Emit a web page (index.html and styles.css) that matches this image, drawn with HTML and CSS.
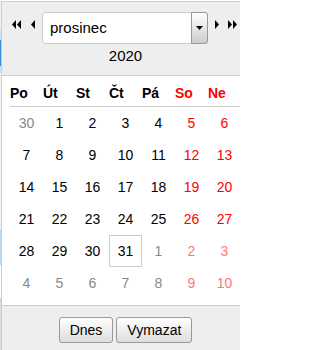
FILE: index.html
```html
<!DOCTYPE html>
<html lang="cs">
<head>
<meta charset="utf-8">
<title>Kalendář</title>
<link rel="stylesheet" href="styles.css">
</head>
<body>
<div class="cal">
  <div class="hdr">
    <div class="nav">
      <svg class="arrow dbl" width="9" height="9" viewBox="0 0 9 9"><polygon points="4,0 4,9 0,4.5"/><polygon points="9,0 9,9 5,4.5"/></svg>
      <svg class="arrow one prev" width="4" height="9" viewBox="0 0 4 9"><polygon points="4,0 4,9 0,4.5"/></svg>
      <div class="sel">
        <span class="sel-text">prosinec</span>
        <span class="sel-btn"><svg width="7" height="4" viewBox="0 0 7 4"><polygon points="0,0 7,0 3.5,4"/></svg></span>
      </div>
      <svg class="arrow one next" width="4" height="9" viewBox="0 0 4 9"><polygon points="0,0 0,9 4,4.5"/></svg>
      <svg class="arrow dbl next2" width="9" height="9" viewBox="0 0 9 9"><polygon points="0,0 0,9 4,4.5"/><polygon points="5,0 5,9 9,4.5"/></svg>
    </div>
    <div class="year">2020</div>
  </div>
  <div class="body">
    <div class="dow">
      <span>Po</span><span>Út</span><span>St</span><span>Čt</span><span>Pá</span><span class="we">So</span><span class="we">Ne</span>
    </div>
    <div class="days">
      <span class="oth">30</span><span>1</span><span>2</span><span>3</span><span>4</span><span class="we">5</span><span class="we">6</span>
      <span>7</span><span>8</span><span>9</span><span>10</span><span>11</span><span class="we">12</span><span class="we">13</span>
      <span>14</span><span>15</span><span>16</span><span>17</span><span>18</span><span class="we">19</span><span class="we">20</span>
      <span>21</span><span>22</span><span>23</span><span>24</span><span>25</span><span class="we">26</span><span class="we">27</span>
      <span>28</span><span>29</span><span>30</span><span class="today">31</span><span class="oth">1</span><span class="oth-we">2</span><span class="oth-we">3</span>
      <span class="oth">4</span><span class="oth">5</span><span class="oth">6</span><span class="oth">7</span><span class="oth">8</span><span class="oth-we">9</span><span class="oth-we">10</span>
    </div>
  </div>
  <div class="ftr">
    <button class="btn btn-today" type="button">Dnes</button>
    <button class="btn btn-clear" type="button">Vymazat</button>
  </div>
</div>
</body>
</html>
```
FILE: styles.css
```css
html, body {
  margin: 0;
  padding: 0;
}
body {
  width: 240px;
  height: 350px;
  overflow: hidden;
  background-color: #fff;
  background-image: linear-gradient(to bottom,
    #f0f0f0 0 30px, #cde3f6 30px 40px, #3a8ad6 40px 66px, #cde3f6 66px 73px,
    #f2f2f2 73px 230px, #b7d9f4 230px 265px, #ffffff 265px 298px,
    #b7d9f4 298px 302px, #dddddd 302px);
  background-size: 1px 100%;
  background-repeat: no-repeat;
  font-family: "Liberation Sans", Arial, sans-serif;
  color: #000;
}
.cal {
  margin: 1px 0 0 1px;
  width: 247px;
  border-left: 1px solid #ccc;
  border-top: 1px solid #ccc;
  border-right: 1px solid #ccc;
}
.hdr {
  background: #eee;
  border-bottom: 1px solid #ccc;
  padding: 10px 0 10px;
}
.nav {
  display: flex;
  align-items: flex-start;
  padding-left: 10px;
}
.arrow {
  display: block;
  flex: none;
  margin-top: 8px;
  fill: #000;
}
.prev { margin-left: 10px; margin-right: 7px; }
.next { margin-left: 7px; }
.next2 { margin-left: 9px; }
.sel {
  display: flex;
  flex: none;
  width: 166px;
  height: 32px;
  box-sizing: border-box;
  border: 1px solid #ccc;
  border-radius: 3px;
  background: #fff;
}
.sel-text {
  flex: 1;
  padding-left: 7px;
  font-size: 15px;
  line-height: 30px;
}
.sel-btn {
  display: flex;
  align-items: center;
  justify-content: center;
  width: 17px;
  box-sizing: border-box;
  margin: -1px -1px -1px 0;
  border: 1px solid #999;
  border-radius: 0 3px 3px 0;
  background: linear-gradient(#fff, #ccc);
}
.sel-btn svg { fill: #000; }
.year {
  margin-top: 3px;
  text-align: center;
  font-size: 15px;
  line-height: 18px;
}
.body {
  background: #fff;
  padding: 4px 8px 6px;
}
.dow {
  display: grid;
  grid-template-columns: repeat(7, 33px);
  border-bottom: 1px solid #ccc;
  font-size: 14px;
  font-weight: bold;
  line-height: 26px;
}
.days {
  display: grid;
  grid-template-columns: repeat(7, 33px);
  grid-auto-rows: 32px;
  font-size: 14px;
}
.days span {
  display: flex;
  align-items: center;
  justify-content: center;
  box-sizing: border-box;
  border: 1px solid transparent;
}
.days .today { border-color: #ccc; }
.we { color: #f00; }
.oth { color: #888; }
.oth-we { color: #f77; }
.ftr {
  background: #eee;
  border-top: 1px solid #ccc;
  padding-top: 11px;
  height: 40px;
  display: flex;
  justify-content: center;
  align-items: flex-start;
  gap: 3px;
}
.btn {
  height: 26px;
  margin: 0;
  padding: 0 10px;
  border: 1px solid #999;
  border-radius: 3px;
  background: linear-gradient(#fff, #ddd);
  font-family: "Liberation Sans", Arial, sans-serif;
  font-size: 14px;
  color: #000;
}
```
